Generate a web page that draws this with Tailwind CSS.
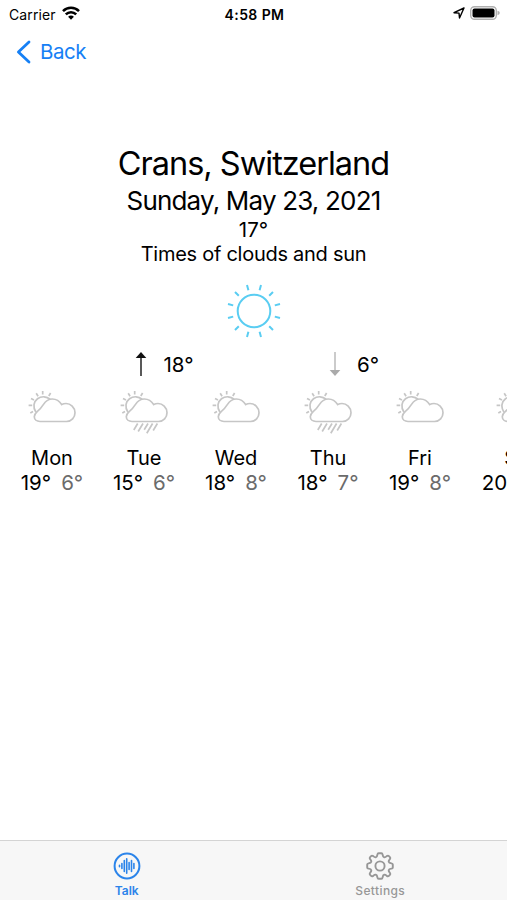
<!doctype html>
<html lang="en">
<head>
    <meta charset="UTF-8">
    <meta name="viewport" content="width=device-width, initial-scale=1.0">
    <script src="https://cdn.jsdelivr.net/npm/@tailwindcss/browser@4"></script>
    <title>Weather</title>
</head>
<body class="bg-white font-['Inter',sans-serif] text-black">
<svg class="hidden">
    <symbol id="cloud-sun" viewBox="0 0 48 44">
        <path d="M12 31.5H38.5C43.5 31.5 47 27.6 47 22.8C47 17.3 42.5 13.5 38 13.5C36.3 13.5 35 13.9 33.7 14.6C31.5 11 28 9 24.3 9C20.3 9 17.6 11.2 15.5 14.4C13.6 17.4 11.8 19.4 9.2 21.6C7.3 23.2 6.3 24.9 6.3 26.8C6.3 29.6 8.8 31.5 12 31.5Z"/>
        <path d="M8 22.3C4.4 17 5.8 11.6 9.5 8.8C13.5 5.8 18.8 6.3 22 9.2"/>
        <path d="M14.7 1V4.6M8.2 3.2L10.1 6.2M3 8.5L6 10.1M.6 15.4H4.2M2.3 23L5 21.4M22.6 3L20.8 6"/>
    </symbol>
    <symbol id="rain" viewBox="0 0 48 44">
        <path d="M17.7 33.5L13.8 40M23 33.5L18.2 41.5M28 33.5L24.2 39.8M32.6 33.5L26.8 43.3M37.4 33.5L33.2 40.5"/>
    </symbol>
</svg>
<div class="flex flex-col h-[900px] w-[507px] overflow-hidden">
    <header class="grid grid-cols-3 items-center h-7 pl-[9px] pr-[7px] text-[14px]">
        <div class="flex items-center gap-[6px]">
            <span class="tracking-[0.1px]">Carrier</span>
            <svg class="w-[18px] h-[14px] -mt-0.5" viewBox="0 0 18 14" fill="none" stroke="#000" stroke-width="2.5">
                <path d="M1 5.1C5.4.6 12.6.6 17 5.1M3.8 8.4C6.7 5.4 11.3 5.4 14.2 8.4"/>
                <path d="M9 13.7L6.1 10.7C7.7 9.1 10.3 9.1 11.9 10.7Z" fill="#000" stroke="none"/>
            </svg>
        </div>
        <span class="text-center font-semibold text-[14px] tracking-[0.4px] whitespace-nowrap">4:58 PM</span>
        <div class="flex items-center justify-end gap-[5px] -mt-0.5">
            <svg class="w-3 h-3" viewBox="0 0 12 12" fill="none" stroke="#000" stroke-width="1.4" stroke-linejoin="round">
                <path d="M11 1L1 5.7L6 6.1L6.5 11Z"/>
            </svg>
            <svg class="w-[30px] h-[14px]" viewBox="0 0 30 14">
                <rect x=".7" y=".7" width="25.6" height="12.6" rx="3.8" fill="#fff" stroke="#b0b0b0" stroke-width="1.4"/>
                <rect x="2.5" y="2.5" width="22" height="9" rx="2" fill="#000"/>
                <path d="M27.5 4.8Q29.8 5.4 29.8 7T27.5 9.2Z" fill="#b0b0b0"/>
            </svg>
        </div>
    </header>
    <nav class="flex items-center gap-[8px] h-12 pl-4 text-[#1680f5]">
        <svg class="w-4 h-6" viewBox="0 0 16 24" fill="none" stroke="currentColor" stroke-width="2.8" stroke-linecap="round" stroke-linejoin="round">
            <path d="M13 2L2.4 12L13 22"/>
        </svg>
        <span class="pt-px text-[20.5px] tracking-[-0.5px]">Back</span>
    </nav>
    <main class="flex flex-col items-center grow pt-[67px]">
        <h1 class="text-[32.5px] leading-[41px] tracking-[-1px] word-spacing whitespace-nowrap">Crans, Switzerland</h1>
        <h2 class="pt-px text-[26px] leading-8 tracking-[-0.82px] whitespace-nowrap">Sunday, May 23, 2021</h2>
        <p class="text-[20.5px] leading-[25px]">17°</p>
        <p class="text-[20px] leading-[25px] tracking-[-0.27px] whitespace-nowrap">Times of clouds and sun</p>
        <svg class="w-[56px] h-[56px] mt-[16px]" viewBox="-28 -28 56 56" fill="none" stroke="#5acdf2" stroke-width="2">
            <circle r="16.3"/>
            <path d="M5.6 -20.8L7 -26M-5.6 -20.8L-7 -26M5.6 20.8L7 26M-5.6 20.8L-7 26M20.8 5.6L26 7M20.8 -5.6L26 -7M-20.8 5.6L-26 7M-20.8 -5.6L-26 -7M15.2 15.2L19 19M15.2 -15.2L19 -19M-15.2 15.2L-19 19M-15.2 -15.2L-19 -19"/>
        </svg>
        <div class="grid grid-cols-2 w-[388px] mt-[12px] mb-[11px] text-[20.5px] leading-[28px]">
            <div class="flex items-center justify-center gap-4 pl-4">
                <svg class="w-3 h-6 -mt-0.5" viewBox="0 0 12 24">
                    <path d="M6 3V24" stroke="#222" stroke-width="1.5"/>
                    <path d="M6 0L11.3 6H.7Z" fill="#111"/>
                </svg>
                <span>18°</span>
            </div>
            <div class="flex items-center justify-center gap-4 pl-[7px]">
                <svg class="w-3 h-6 -mt-0.5" viewBox="0 0 12 24">
                    <path d="M6 0V20" stroke="#b5b5b5" stroke-width="1.4"/>
                    <path d="M6 24L11.3 18H.7Z" fill="#aaa"/>
                </svg>
                <span>6°</span>
            </div>
        </div>
        <div class="flex self-start w-full pl-[6px] overflow-hidden text-[20px] leading-[25px]">
            <div class="flex flex-col items-center w-[92px] shrink-0">
                <svg class="w-12 h-11 mb-[12px]" fill="none" stroke="#c6c6c6" stroke-width="1.7"><use href="#cloud-sun"/></svg>
                <span>Mon</span>
                <div class="flex gap-[10px] -mt-px text-[20.5px]"><span>19°</span><span class="text-[#6b6b6b]">6°</span></div>
            </div>
            <div class="flex flex-col items-center w-[92px] shrink-0">
                <svg class="w-12 h-11 mb-[12px]" fill="none" stroke="#c6c6c6" stroke-width="1.7"><use href="#cloud-sun"/><use href="#rain"/></svg>
                <span>Tue</span>
                <div class="flex gap-[10px] -mt-px text-[20.5px]"><span>15°</span><span class="text-[#6b6b6b]">6°</span></div>
            </div>
            <div class="flex flex-col items-center w-[92px] shrink-0">
                <svg class="w-12 h-11 mb-[12px]" fill="none" stroke="#c6c6c6" stroke-width="1.7"><use href="#cloud-sun"/></svg>
                <span>Wed</span>
                <div class="flex gap-[10px] -mt-px text-[20.5px]"><span>18°</span><span class="text-[#6b6b6b]">8°</span></div>
            </div>
            <div class="flex flex-col items-center w-[92px] shrink-0">
                <svg class="w-12 h-11 mb-[12px]" fill="none" stroke="#c6c6c6" stroke-width="1.7"><use href="#cloud-sun"/><use href="#rain"/></svg>
                <span>Thu</span>
                <div class="flex gap-[10px] -mt-px text-[20.5px]"><span>18°</span><span class="text-[#6b6b6b]">7°</span></div>
            </div>
            <div class="flex flex-col items-center w-[92px] shrink-0">
                <svg class="w-12 h-11 mb-[12px]" fill="none" stroke="#c6c6c6" stroke-width="1.7"><use href="#cloud-sun"/></svg>
                <span>Fri</span>
                <div class="flex gap-[10px] -mt-px text-[20.5px]"><span>19°</span><span class="text-[#6b6b6b]">8°</span></div>
            </div>
            <div class="flex flex-col items-center w-[107px] shrink-0">
                <svg class="w-12 h-11 mb-[12px]" fill="none" stroke="#c6c6c6" stroke-width="1.7"><use href="#cloud-sun"/></svg>
                <span>Sat</span>
                <div class="flex gap-[10px] -mt-px text-[20.5px]"><span>20°</span><span class="text-[#6b6b6b]">10°</span></div>
            </div>
        </div>
    </main>
    <footer class="grid grid-cols-2 h-[60px] border-t border-[#d4d4d4] bg-[#f7f7f7] pt-[11px] text-[12px] leading-[14px] font-medium">
        <div class="flex flex-col items-center gap-[4px] text-[#2b84ea]">
            <svg class="w-7 h-7" viewBox="0 0 28 28" fill="none" stroke="currentColor" stroke-linecap="round">
                <circle cx="14" cy="14" r="12.4" stroke-width="2"/>
                <path d="M6.5 13.2V14.8M8.9 11.5V16.5M11.3 8.5V19.5M13.7 6.8V21.2M16.1 10.5V17.5M18.5 8.5V19.5M20.9 11.5V16.5" stroke-width="1.6"/>
            </svg>
            <span class="font-semibold">Talk</span>
        </div>
        <div class="flex flex-col items-center gap-[4px] text-[#979797]">
            <svg class="w-7 h-7" viewBox="0 0 28 28" fill="none" stroke="currentColor" stroke-width="1.9" stroke-linejoin="round">
                <circle cx="14" cy="14" r="4.6"/>
                <path d="M12.6 1.2H15.4Q16.4 1.2 16.6 2.6Q16.9 5 18.2 5.3Q19.3 5.5 20.8 4.1Q22 3.2 22.9 4.1L23.9 5.1Q24.8 6 23.9 7.2Q22.5 8.7 22.7 9.8Q23 11.1 25.4 11.4Q26.8 11.6 26.8 12.6V15.4Q26.8 16.4 25.4 16.6Q23 16.9 22.7 18.2Q22.5 19.3 23.9 20.8Q24.8 22 23.9 22.9L22.9 23.9Q22 24.8 20.8 23.9Q19.3 22.5 18.2 22.7Q16.9 23 16.6 25.4Q16.4 26.8 15.4 26.8H12.6Q11.6 26.8 11.4 25.4Q11.1 23 9.8 22.7Q8.7 22.5 7.2 23.9Q6 24.8 5.1 23.9L4.1 22.9Q3.2 22 4.1 20.8Q5.5 19.3 5.3 18.2Q5 16.9 2.6 16.6Q1.2 16.4 1.2 15.4V12.6Q1.2 11.6 2.6 11.4Q5 11.1 5.3 9.8Q5.5 8.7 4.1 7.2Q3.2 6 4.1 5.1L5.1 4.1Q6 3.2 7.2 4.1Q8.7 5.5 9.8 5.3Q11.1 5 11.4 2.6Q11.6 1.2 12.6 1.2Z"/>
            </svg>
            <span class="tracking-[0.4px]">Settings</span>
        </div>
    </footer>
</div>
</body>
</html>
